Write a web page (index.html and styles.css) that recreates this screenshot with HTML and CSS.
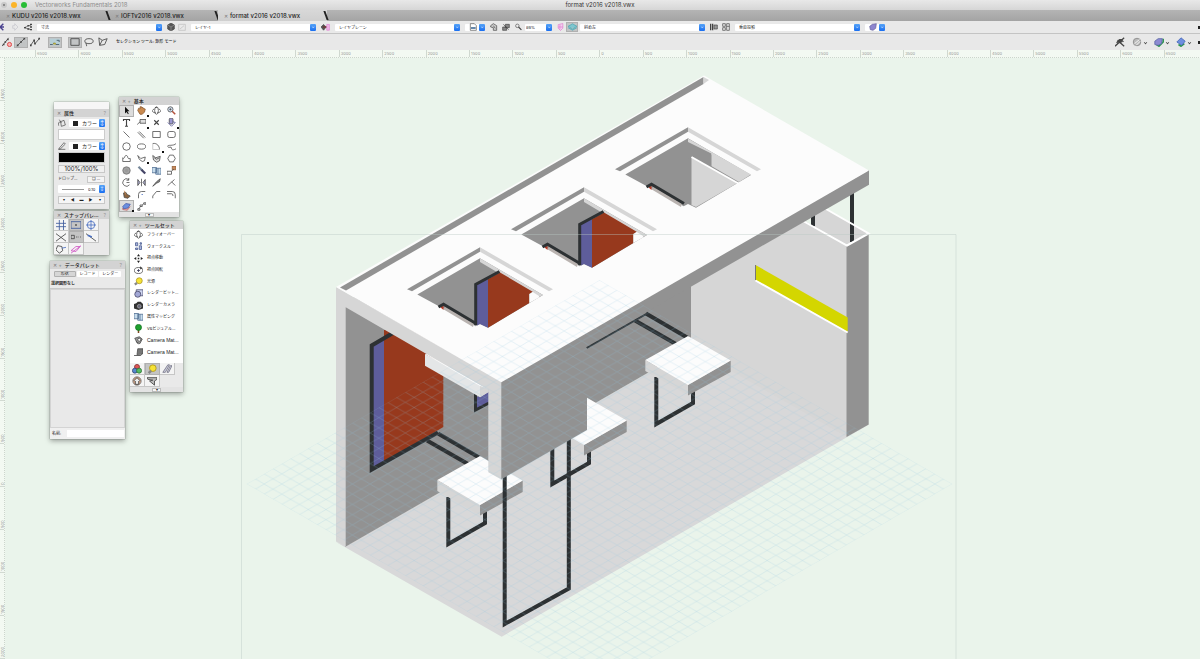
FILE: index.html
```html
<!DOCTYPE html>
<html lang="ja">
  <head>
    <meta charset="UTF-8" />
    <meta name="viewport" content="width=device-width, initial-scale=1.0" />
    <title>format v2016 v2018.vwx</title>
    <link rel="stylesheet" href="styles.css">
  </head>

  <body>
    <header class="titlebar">
      <div class="lights">
        <span class="light close"></span>
        <span class="light minimize"></span>
        <span class="light zoom"></span>
        <span class="app-name">Vectorworks Fundamentals 2018</span>
      </div>
      <div class="title">format v2016 v2018.vwx</div>
    </header>

    <nav class="tabs">
      <button class="tab"><span class="x">✕</span>KUDU v2016 v2018.vwx</button>
      <button class="tab"><span class="x">✕</span>IOFTv2016 v2018.vwx</button>
      <button class="tab active"><span class="x">✕</span>format v2016 v2018.vwx</button>
    </nav>

    <div class="viewbar">
      <div class="group wide">
        <svg class="ico" viewBox="0 0 12 12"><path d="M5 1L0 6l5 5M0 6h6" stroke="#4b4390" stroke-width="2"/></svg>
        <svg class="ico" viewBox="0 0 12 12"><path d="M4 1l5 5-5 5V8H1V4h3z" stroke="#c4c4cc"/></svg>
        <svg class="ico" viewBox="0 0 12 12"><path d="M0 7l11-4M0 7l11 3" stroke="#555"/><path d="M0 7h3M5 4h3M5 9h3M9 2h3M9 6h3M9 10h3" stroke="#444" stroke-width="2"/></svg>
      </div>
      <div class="drop"><select aria-label="クラス"><option>寸法</option></select></div>
      <div class="group">
        <svg class="ico" viewBox="0 0 12 12"><path d="M6 0l5 3v6l-5 3-5-3V3z" fill="#555"/><path d="M1 3l5 3 5-3M6 6v6" stroke="#999"/></svg>
        <svg class="ico" viewBox="0 0 12 12"><path d="M1 2h10v9H1zM3 9l6-5" stroke="#bbb"/></svg>
      </div>
      <div class="drop"><select aria-label="レイヤ"><option>レイヤ-1</option></select></div>
      <svg class="ico plane" viewBox="0 0 14 12"><path d="M0 6l4-4 4 4-4 5z" fill="#555"/><path d="M3 6h8" stroke="#733" stroke-width="2"/><path d="M9 2h4v9H9z" stroke="#df7bd0" fill="#f0b9e8"/></svg>
      <div class="drop"><select aria-label="プレーン"><option>レイヤプレーン</option></select></div>
      <div class="drop small">
        <svg class="ico" viewBox="0 0 12 12"><path d="M2 1h6l3 3v7H2z" fill="#fff" stroke="#555"/><path d="M3 6h7v3H3z" fill="#68a" stroke="none"/></svg>
        <select aria-label="ビュー"><option></option></select>
      </div>
      <div class="group wide">
        <svg class="ico" viewBox="0 0 12 12"><path d="M1 4l4-3 5 3v7H5V7L1 6z" fill="#ccc"/><path d="M5 4l3 4"/></svg>
        <svg class="ico" viewBox="0 0 12 12"><path d="M5 2h6v5H5zM1 6h6v5H1z" fill="#888"/><path d="M2 2l8 8"/></svg>
      </div>
      <div class="group">
        <svg class="ico lens" viewBox="0 0 12 12"><circle cx="4" cy="4" r="3"/><path d="M6 6l5 5" stroke-width="2"/></svg>
        <div class="drop percent"><select aria-label="倍率"><option>89%</option></select></div>
      </div>
      <div class="group tight">
        <svg class="ico lens" viewBox="0 0 12 12"><path d="M2 2l8-2v8l-4 4-4-4zM5 2v8M2 6h8" stroke="#dc6fcb" fill="#f3d0ee"/></svg>
        <button class="plan on" aria-label="表示"><svg class="ico plane" viewBox="0 0 14 12"><path d="M7 1l7 4-7 4-7-4zM0 7l7 4 7-4" fill="#7cc6cf" stroke="#4aa3ae"/></svg></button>
        <div class="drop"><select aria-label="ビュー方向"><option>斜め左</option></select></div>
      </div>
      <div class="group wide">
        <svg class="ico" viewBox="0 0 12 12"><path d="M1 1v10M4 1v10" stroke-width="2"/><path d="M6 3h5v6H6z" fill="#999"/></svg>
        <svg class="ico" viewBox="0 0 12 12"><path d="M1 1h4v4H1zM1 7h4v4H1zM7 1h4v10H7zM7 5h4"/></svg>
      </div>
      <div class="drop"><select aria-label="投影"><option>垂直投影</option></select></div>
      <div class="drop small">
        <svg class="ico" viewBox="0 0 12 12"><path d="M1 5l4-3 6-1-1 7-4 3-4-1z" fill="#8d86cf" stroke="#67629b"/></svg>
        <select aria-label="レンダリング"><option></option></select>
      </div>
      <span class="more"></span>
    </div>

    <div class="modebar">
      <div class="modes">
        <button aria-label="変形禁止"><svg class="ico" viewBox="0 0 12 12"><path d="M0 11L8 1"/><path d="M1 9h2M3 6h2M6 3h2" stroke-width="2"/><circle cx="9" cy="9" r="2.5" stroke="#d33" fill="#f8b5b5"/></svg></button>
        <button class="on" aria-label="単一変形"><svg class="ico" viewBox="0 0 12 12"><path d="M1 11L11 1"/><path d="M1 10h2M5 6h2M9 2h2" stroke-width="2"/></svg></button>
        <button aria-label="複数変形"><svg class="ico" viewBox="0 0 12 12"><path d="M0 11l5-7 1 4 6-7"/><path d="M0 10h2M4 4h2M5 8h2M10 2h2" stroke-width="2"/></svg></button>
      </div>
      <div class="modes">
        <button class="on" aria-label="ハンドル"><svg class="ico" viewBox="0 0 12 12"><path d="M0 2h12v8H0z" fill="#b7cfd6" stroke="none"/><path d="M0 9h3l2-2 2 2h4M8 4h3v2" stroke="#456"/><path d="M4 8h3" stroke="#b7a733" stroke-width="2"/></svg></button>
      </div>
      <div class="modes">
        <button class="on" aria-label="矩形"><svg class="ico" viewBox="0 0 12 12"><path d="M1 2h10v8H1z"/></svg></button>
        <button aria-label="なげなわ"><svg class="ico" viewBox="0 0 12 12"><ellipse cx="6" cy="5" rx="5" ry="3"/><path d="M3 7c-2 1 1 2 0 4"/></svg></button>
        <button aria-label="多角形"><svg class="ico" viewBox="0 0 12 12"><path d="M1 1l4 3 6-2-3 7-6 1zM2 10l3-6"/></svg></button>
      </div>
      <span class="mode-name">セレクション ツール: 矩形 モード</span>
      <div class="options">
        <button aria-label="スナップ"><svg class="ico" viewBox="0 0 12 12"><path d="M0 11L11 1M3 4l8 7M2 7c3-5 6-5 8-1" stroke-width="1.5"/><circle cx="6" cy="5" r="2" fill="#444"/></svg></button>
        <button aria-label="設定"><svg class="ico" viewBox="0 0 12 12"><circle cx="6" cy="6" r="4.5" fill="#bbb" stroke="#888"/><path d="M3 8l6-5M5 10l5-5" stroke="#fff"/></svg><i class="chev"></i></button>
        <button aria-label="表示設定"><svg class="ico" viewBox="0 0 12 12"><path d="M3 9l3 2 5-5V2" stroke="#2f9650" stroke-width="2"/><path d="M1 5l4-3h5l-1 6-4 2-4-1z" fill="#8d8ad2" stroke="#5c68a6"/></svg><i class="chev"></i></button>
        <button aria-label="方向"><svg class="ico" viewBox="0 0 12 12"><path d="M3 9l3 2 4-3" stroke="#2f9650" stroke-width="2"/><path d="M6 1l5 4-4 5-6-4z" fill="#6f8fe0" stroke="#4868b8"/></svg><i class="chev"></i></button>
        <span class="more"></span>
      </div>
    </div>

    <main class="workspace">
      <svg class="drawing" viewBox="0 50 1200 609" preserveAspectRatio="xMidYMid slice">
        <defs>
          <pattern id="grid" patternUnits="userSpaceOnUse" x="599.5" y="280" width="17.65" height="10.2">
            <path class="grid-line" d="M0 0L17.65 10.2M17.65 0L0 10.2"/>
          </pattern>
          <g id="stool">
            <path class="bar" d="M438 433.5L480 458M427 440.5L468 464"/>
            <path class="bar" d="M448.300 497V544L485 523V510"/>
            <path class="light-face" d="M437.300 480L480 505V515L437.300 491z"/>
            <path class="dark-face" d="M480 505L522.700 480.500V492L480 515.500z"/>
            <path class="top-face" d="M437.300 480L480 456L522.700 480.500L480 505z"/>
          </g>
          <g id="groove">
            <path class="dark-face" d="M407 289.300L480 247.300V251.700L412 291.300z"/>
            <path class="light-face" d="M480 247.300L553 289.300L549 291.300L480 251.700z"/>
            <path class="dark-face" d="M417.300 294.500L480 258.300L543 295L488 327.700L480 324L475.700 326.300z"/>
          </g>
          <g id="rail">
            <path d="M443 309L446 306L474 323L473 327z" fill="#b9b3b0"/>
            <path d="M440.500 307.500L443.500 305.500V310z" fill="#b83a26"/>
            <path class="bar thin" d="M438.500 307L443.500 304.200L476 323.500"/>
          </g>
          <g id="skylight">
            <use href="#groove"/>
            <path class="light-face" d="M480 258.300L543 295L539 297L480 262z"/>
            <path class="blue" d="M477 284L488 278V327.700L480 324L477 325.500z"/>
            <path class="red" d="M488 279.300L500 272.500L532.700 291.700L529.300 294V303L488 327.700z"/>
            <path class="top-face" d="M529.300 294L532.700 292L539 296V297.500L529.300 303z"/>
            <path class="bar thin" d="M475.700 325V284.500L499.500 271.500"/>
            <use href="#rail"/>
          </g>
        </defs>

        <!-- floor and walls -->
        <path class="floor" d="M336 542L346 546L691 348L869 424.500L501.700 636.700z"/>
        <path class="dark-face" d="M345 300L691 200V348L345 547z"/>
        <path class="light-face" d="M691 286L805 221L847 245.500V437L691 348z"/>
        <path class="light-face" d="M812 216L827 209L868 233L847 245L812 226z"/>
        <path class="dark-face" d="M846.500 246L868.700 233.500V424.500L846.500 437z"/>
        <path class="bar" d="M813 205V226M852 190V242"/>
        <path class="rim" d="M804 221.500L847 245.500L868.700 233.500L826 209"/>
        <path fill="#d4d600" d="M755.500 265L847.700 317.500V332L755.500 280z"/>
        <path class="rim" d="M755.500 280.500L847.700 332.500"/>
        <path d="M755.500 265V280" stroke="#777"/>

        <!-- wall picture -->
        <path class="red" d="M384 330H443.300V427L384 462.500z"/>
        <path class="blue" d="M373 346L384 338V462.500L373 469z"/>
        <path class="bar" d="M393 333L371.700 345.500V469.500L438 432.500"/>
        <path class="blue" d="M477 397L489 391V403L477 409z"/>
        <path class="bar thin" d="M475.500 394V410L489 403"/>

        <use href="#stool" x="104" y="-60"/>
        <use href="#stool"/>

        <!-- counter panel and roof -->
        <path class="bar" d="M504.700 470V624L568.800 588.500V435"/>
        <path class="dark-face" d="M501 381L869 170V184.700L691.300 286.500L587 346V430L501 479.500z"/>
        <path class="bar hair" d="M586.700 348L648 313"/>
        <use href="#stool" x="208" y="-120"/>
        <path class="shelf" d="M425 354V365.700L480 397.300L488.500 392V387z"/>
        <path class="top-face" d="M425 354L430 353L488.500 387V389L480 386z"/>
        <path class="light-face" d="M480 386L488.500 389V392L480 397.300z"/>
        <path class="light-face" d="M336 287L501.300 381V479.500L488.300 472.300V389.700L345.700 307.300V546.700L336 541.500z"/>
        <path class="roof" d="M336 287L704 75.500L869 170.500L501.300 382.300z"/>
        <path class="dark-face" d="M340 287.500L703.500 77V84L346 290.500z"/>
        <path class="light-face" d="M703.500 77L709 80L703.500 84z"/>
        <use href="#skylight"/>
        <use href="#skylight" x="104" y="-60"/>
        <use href="#groove" x="208" y="-120"/>
        <path class="light-face" d="M688 138.500L751 174.500L739 182L711.300 166V153.500L688 142z"/>
        <path class="dark-face" d="M688 143L711.300 155V167L688 158z"/>
        <path class="light-face" d="M691.500 157L737.500 183L696 207L691.500 205z"/>
        <path class="rim" d="M691.500 157L738.500 183.500"/>
        <use href="#rail" x="208" y="-120"/>

        <path fill="url(#grid)" d="M599.500 280L952.500 484L599.500 688L246.500 484z"/>
        <path class="page-edge" d="M241.500 659V234.500H956V659"/>
      </svg>

      <div class="ruler top">
        <span>6500</span><span>6000</span><span>5500</span><span>5000</span><span>4500</span><span>4000</span><span>3500</span><span>3000</span><span>2500</span><span>2000</span><span>1500</span><span>1000</span><span>500</span><span>0</span><span>500</span><span>1000</span><span>1500</span><span>2000</span><span>2500</span><span>3000</span><span>3500</span><span>4000</span><span>4500</span><span>5000</span><span>5500</span><span>6000</span><span>6500</span>
      </div>
      <div class="ruler left">
        <span>4500</span><span>4000</span><span>3500</span><span>3000</span><span>2500</span><span>2000</span><span>1500</span><span>1000</span><span>500</span><span>0</span><span>500</span><span>1000</span><span>1500</span><span>2000</span>
      </div>

      <section class="palette attributes">
        <div class="grip"></div>
        <div class="palette-title"><span class="x">✕</span><b>属性</b><span class="help">?</span></div>
        <div class="attr-body">
          <div class="attr-row">
            <svg class="ico" viewBox="0 0 12 12"><path d="M4 4l5-2 2 7-6 2zM4 4c-3 0-4 3-3 6M2 1l3 5"/></svg>
            <div class="drop color"><span class="swatch"></span><select aria-label="面の属性"><option>カラー</option></select></div>
          </div>
          <div class="fill-box"></div>
          <div class="attr-row">
            <svg class="ico" viewBox="0 0 12 12"><path d="M2 9l7-8 2 2-7 7-3 1zM1 11h10"/></svg>
            <div class="drop color"><span class="swatch"></span><select aria-label="線の属性"><option>カラー</option></select></div>
          </div>
          <div class="fill-box pen"></div>
          <button class="opacity">100%/100%</button>
          <div class="attr-row shadow"><label for="shadow">ドロップ…</label><button id="shadow">❏ …</button></div>
          <div class="drop weight"><span class="line"></span><select aria-label="線の太さ"><option>0.10</option></select></div>
          <div class="markers"><button>▾</button><button>◀</button><button>▬</button><button>▶</button><button>▾</button></div>
        </div>
      </section>

      <section class="palette snaps">
        <div class="palette-title"><span class="x">✕</span><b>スナップパレ…</b><span class="help">?</span></div>
        <div class="snap-grid">
          <button aria-label="グリッド"><svg class="ico" viewBox="0 0 12 12"><path d="M4 0v12M9 0v12M0 4h12M0 8h12" stroke="#3d5a9c"/></svg></button>
          <button class="on" aria-label="図形"><svg class="ico" viewBox="0 0 12 12"><path d="M0 2h12v8H0z" stroke="#3d5a9c"/><path d="M5 6h2" stroke-width="2"/></svg></button>
          <button aria-label="角度"><svg class="ico" viewBox="0 0 12 12"><circle cx="6" cy="6" r="4.500" stroke="#4a6fc0"/><path d="M6 0v12M0 6h12" stroke="#4a6fc0"/></svg></button>
          <button aria-label="交点"><svg class="ico" viewBox="0 0 12 12"><path d="M0 2l12 9M0 11l12-9"/></svg></button>
          <button class="on" aria-label="スマートポイント"><svg class="ico" viewBox="0 0 12 12"><path d="M0 4h4v4H0zM6 6h1M8 6h1M11 6h1"/></svg></button>
          <button aria-label="定点"><svg class="ico" viewBox="0 0 12 12"><path d="M0 2l12 9"/><path d="M2 4l5 2" stroke="#4a6fc0" stroke-width="2"/></svg></button>
          <button aria-label="エッジ"><svg class="ico" viewBox="0 0 12 12"><path d="M2 2l-2 5 4 4 4-3M2 2l5 1 1 5"/><path d="M7 5l5-1" stroke="#4a6fc0"/></svg></button>
          <button aria-label="接線"><svg class="ico" viewBox="0 0 12 12"><path d="M0 8l6-5h5l-5 6z" stroke="#d05ac5"/><path d="M0 11L12 2" stroke="#d05ac5"/></svg></button>
        </div>
      </section>

      <section class="palette basic">
        <div class="palette-title"><span class="x">✕ +</span><b>基本</b></div>
        <div class="tool-grid">
          <button class="on" aria-label="セレクション"><svg class="ico" viewBox="0 0 12 12"><path d="M4 1v9l2-2 2 3 1-1-2-3h3z" fill="#111" stroke="none"/></svg></button>
          <button class="sub" aria-label="パン"><svg class="ico" viewBox="0 0 12 12"><path d="M1 6l1-3 2 1V1h2v1h2v1l3 1-1 4-3 3H4z" fill="#c98a50" stroke="#8a5a30"/></svg></button>
          <button aria-label="フライオーバー"><svg class="ico" viewBox="0 0 12 12"><ellipse cx="6" cy="6" rx="2.500" ry="5"/><path d="M3 4C-2 6 1 9 5 9M9 4c5 2 2 5-2 5M4 2h3"/></svg></button>
          <button aria-label="ズーム"><svg class="ico" viewBox="0 0 12 12"><circle cx="4.500" cy="4.500" r="3.500" fill="#d7e5f5"/><path d="M3 4.500h3M4.500 3v3"/><path d="M7 7l4 4" stroke="#b2503a" stroke-width="2"/></svg></button>
          <button aria-label="文字"><svg class="ico" viewBox="0 0 12 12"><path d="M2 4V2h8v2M6 2v9M4 11h4" stroke-width="1.500"/></svg></button>
          <button class="sub" aria-label="引出線"><svg class="ico" viewBox="0 0 12 12"><path d="M4 2h8v5H4zM4 5L0 9" fill="#ddd"/></svg></button>
          <button aria-label="基準点"><svg class="ico" viewBox="0 0 12 12"><path d="M3 3l6 6M9 3L3 9" stroke-width="1.500"/></svg></button>
          <button class="sub" aria-label="シンボル"><svg class="ico" viewBox="0 0 12 12"><rect x="3" y="0" width="5" height="8" rx="2" fill="#9b98d0"/><path d="M1 6l5 5 5-5-3-1" stroke="#4f4d92"/></svg></button>
          <button aria-label="直線"><svg class="ico" viewBox="0 0 12 12"><path d="M2 2l8 8"/></svg></button>
          <button aria-label="ダブルライン"><svg class="ico" viewBox="0 0 12 12"><path d="M3 2l8 8M1 3l8 8"/></svg></button>
          <button aria-label="四角形"><svg class="ico" viewBox="0 0 12 12"><path d="M1 2h10v8H1z"/></svg></button>
          <button aria-label="隅の丸い四角形"><svg class="ico" viewBox="0 0 12 12"><rect x="1" y="2" width="10" height="8" rx="2.500"/></svg></button>
          <button aria-label="円"><svg class="ico" viewBox="0 0 12 12"><circle cx="6" cy="6" r="5"/></svg></button>
          <button aria-label="長円"><svg class="ico" viewBox="0 0 12 12"><ellipse cx="6" cy="6" rx="5.500" ry="3.500"/></svg></button>
          <button class="sub" aria-label="円弧"><svg class="ico" viewBox="0 0 12 12"><path d="M1 2c6-1 9 4 9 8"/><path d="M1 2v8h9" stroke="#bbb"/></svg></button>
          <button aria-label="フリーハンド"><svg class="ico" viewBox="0 0 12 12"><path d="M12 2C9 6 0 3 1 6s5-1 5 2 3 3 6 1"/></svg></button>
          <button aria-label="曲線"><svg class="ico" viewBox="0 0 12 12"><path d="M1 10V5c3 3 2-4 5-3s0 5 5 4v4z"/></svg></button>
          <button class="sub" aria-label="多角形"><svg class="ico" viewBox="0 0 12 12"><path d="M1 2l4 4 6-2-1 5-3 1-4-3z"/></svg></button>
          <button aria-label="連続線"><svg class="ico" viewBox="0 0 12 12"><path d="M1 2l4 3 6-2-1 6-4 2-4-3z" fill="#ddd"/><path d="M3 5l3 2 4-2"/></svg></button>
          <button aria-label="正多角形"><svg class="ico" viewBox="0 0 12 12"><path d="M3.500 1.500h5L11 6l-2.500 4.500h-5L1 6z"/></svg></button>
          <button aria-label="螺旋"><svg class="ico" viewBox="0 0 12 12"><circle cx="6" cy="6" r="5" fill="#999" stroke="#777"/><circle cx="6" cy="6" r="3" stroke="#aaa"/></svg></button>
          <button aria-label="アイドロッパ"><svg class="ico" viewBox="0 0 12 12"><path d="M2 1l5 5" stroke="#789" stroke-width="3"/><path d="M6 5l5 5" stroke="#446" stroke-width="3"/></svg></button>
          <button aria-label="属性マッピング"><svg class="ico" viewBox="0 0 12 12"><path d="M0 2h6v7H0zM5 3h7v8H5zM8 3v8" fill="#c7dcec" stroke="#49688e"/></svg></button>
          <button aria-label="変形"><svg class="ico" viewBox="0 0 12 12"><path d="M7 0h5v5H7z" fill="#c58a5f" stroke="#8a5a30"/><path d="M0 7h6v4H0zM6 7l3-3"/></svg></button>
          <button aria-label="回転"><svg class="ico" viewBox="0 0 12 12"><path d="M10 9a5 5 0 1 1-1-7M9 0v3H6M6 6h4"/></svg></button>
          <button aria-label="ミラー"><svg class="ico" viewBox="0 0 12 12"><path d="M6 1v10M1 2v8l3-4zM11 2v8L8 6z" fill="#aac"/></svg></button>
          <button aria-label="カッター"><svg class="ico" viewBox="0 0 12 12"><path d="M1 11l5-6 5-4-1 4-4 2z" fill="#888"/></svg></button>
          <button aria-label="トリミング"><svg class="ico" viewBox="0 0 12 12"><path d="M1 10l9-8M6 5l5 5"/></svg></button>
          <button aria-label="変位"><svg class="ico" viewBox="0 0 12 12"><path d="M2 4l3-1 2 3 4 2-3 3-5-1z" fill="#8c6540"/><path d="M3 1l2 5" stroke="#c98a50"/></svg></button>
          <button aria-label="フィレット"><svg class="ico" viewBox="0 0 12 12"><path d="M2 11V6q0-4 4-4h5"/><path d="M6 6h2" stroke="#4a6fc0"/></svg></button>
          <button aria-label="面取り"><svg class="ico" viewBox="0 0 12 12"><path d="M1 11V8l5-6h5"/></svg></button>
          <button aria-label="オフセット"><svg class="ico" viewBox="0 0 12 12"><path d="M0 2h7q4 0 4 4v5M0 5h6q2 0 2 3"/></svg></button>
          <button class="sub on" aria-label="消しゴム"><svg class="ico" viewBox="0 0 12 12"><path d="M1 8v2l6 1 4-5" stroke="#c26a6a" fill="#e8a8a8"/><path d="M1 6l4-4 6 1-3 5-6 1z" fill="#6b8fe0" stroke="#4659a8"/></svg></button>
          <button aria-label="リシェイプ"><svg class="ico" viewBox="0 0 12 12"><path d="M1 9h3v2H1zM4 4h3v2H4zM9 1h3v2H9zM2 9l3-3M7 4l2-2"/></svg></button>
        </div>
        <div class="palette-foot"><button aria-label="もっと見る">▾</button></div>
      </section>

      <section class="palette toolset">
        <div class="palette-title"><span class="x">✕ +</span><b>ツールセット</b></div>
        <ul class="tool-list">
          <li><svg class="ico" viewBox="0 0 12 12"><ellipse cx="6" cy="6" rx="2.500" ry="5"/><path d="M3 4C-2 6 1 9 5 9M9 4c5 2 2 5-2 5M4 2h3"/></svg>フライオーバー</li>
          <li><svg class="ico" viewBox="0 0 12 12"><path d="M2 1h3v4H2zM7 5h3v5H7zM2 8h3v2H2zM8 1h2v2H8z" fill="#aab6dc" stroke="#44558c"/></svg>ウォークスルー</li>
          <li><svg class="ico" viewBox="0 0 12 12"><path d="M6 0l2 3H4zM6 12l2-3H4zM0 6l3-2v4zM12 6L9 4v4zM5 5h2v2H5z" fill="#222" stroke="none"/></svg>視点移動</li>
          <li><svg class="ico" viewBox="0 0 12 12"><ellipse cx="6" cy="6" rx="5.500" ry="4"/><path d="M6 4v4M4 6h4" stroke="#335"/><path d="M8 1l3 2-3 1" fill="#444"/></svg>視点回転</li>
          <li><svg class="ico" viewBox="0 0 12 12"><circle cx="7" cy="5" r="4" fill="#f7e335" stroke="#aa9420"/><path d="M1 10l3-2" stroke-width="3" stroke="#888"/></svg>光源</li>
          <li><svg class="ico" viewBox="0 0 12 12"><path d="M3 1h9v8H3z" fill="#cfd6ef" stroke="#446"/><circle cx="5" cy="7" r="4" fill="#a3a8d6" stroke="#446"/></svg>レンダービット…</li>
          <li><svg class="ico" viewBox="0 0 12 12"><path d="M0 4l3-1 2-2h4l3 3v6l-6 2-6-2z" fill="#333" stroke="none"/><circle cx="7" cy="7" r="2.500" fill="#667" stroke="#aaa"/></svg>レンダーカメラ</li>
          <li><svg class="ico" viewBox="0 0 12 12"><path d="M0 2h6v7H0zM5 3h7v8H5zM8 3v8" fill="#c7dcec" stroke="#49688e"/></svg>属性マッピング</li>
          <li><svg class="ico" viewBox="0 0 12 12"><path d="M6 6v6" stroke="#7a4a22" stroke-width="2"/><circle cx="6" cy="4.500" r="4" fill="#1fa02f" stroke="#117020"/></svg>VBビジュアル…</li>
          <li class="latin"><svg class="ico" viewBox="0 0 12 12"><path d="M1 3l6-2 4 3-3 6-4-1z" fill="#999"/><circle cx="7" cy="5" r="2" fill="#fff"/><path d="M3 7l3 4"/></svg>Camera Mat...</li>
          <li class="latin"><svg class="ico" viewBox="0 0 12 12"><path d="M5 1h7v6L8 9H4z" fill="#777"/><path d="M0 10h9l2-2" fill="#999"/></svg>Camera Mat...</li>
        </ul>
        <div class="set-grid">
          <button aria-label="ビジュアライズ"><svg class="ico" viewBox="0 0 12 12"><circle cx="6" cy="3.500" r="3" fill="#d55" stroke="#833"/><circle cx="3.500" cy="8" r="3" fill="#58c" stroke="#347"/><circle cx="8.500" cy="8" r="3" fill="#5b6" stroke="#373"/></svg></button>
          <button class="on" aria-label="光源"><svg class="ico" viewBox="0 0 12 12"><circle cx="7" cy="5" r="4" fill="#f7e335" stroke="#aa9420"/><path d="M2 11l3-3" stroke-width="3" stroke="#888"/></svg></button>
          <button aria-label="寸法"><svg class="ico" viewBox="0 0 12 12"><path d="M1 10l6-9h2l-5 9zM6 10l4-8h2l-4 8z" stroke="#778" fill="#ccd"/></svg></button>
          <button aria-label="建物"><svg class="ico" viewBox="0 0 12 12"><circle cx="6" cy="6" r="5" fill="#d0a184" stroke="#777"/><path d="M2 6l4-4 4 4M4 6v4h4V6" fill="#eee"/></svg></button>
          <button aria-label="ファスナー"><svg class="ico" viewBox="0 0 12 12"><path d="M0 2h12v2L9 6v5L3 6l4-1-6-1z" fill="#bbb"/></svg></button>
        </div>
        <div class="palette-foot"><button aria-label="もっと見る">▾</button></div>
      </section>

      <section class="palette data">
        <div class="palette-title"><span class="x">✕ +</span><b>データパレット</b><span class="help">?</span></div>
        <div class="data-tabs"><button class="on">形状</button><button>レコード</button><button>レンダー</button></div>
        <div class="selection">選択図形なし</div>
        <div class="data-body"></div>
        <div class="data-name"><label for="name">名前:</label><input id="name" type="text" /></div>
      </section>
    </main>
  </body>
</html>
```
FILE: styles.css
```css
* {
  box-sizing: border-box;
}
body {
  margin: 0;
  min-height: 100vh;
  display: flex;
  flex-direction: column;
  font-family: Inter, 'Noto Sans CJK JP', sans-serif;
  font-size: 4px;
  line-height: 6px;
  color: #222;
  background-color: #eaf4eb;
  overflow: hidden;
}
button,
select,
input {
  font: inherit;
  color: inherit;
  margin: 0;
  padding: 0;
  border: 0;
  background: none;
  appearance: none;
}
button {
  display: flex;
  align-items: center;
  justify-content: center;
}
.ico {
  width: 8px;
  height: 8px;
  flex: none;
  fill: none;
  stroke: #444;
  stroke-width: 1;
}

/* title bar and tabs */
.titlebar {
  height: 10px;
  display: grid;
  grid-template-columns: 1fr auto 1fr;
  align-items: center;
  font-size: 6px;
  line-height: 10px;
  background: linear-gradient(#e8e8e8, #d6d6d6);
}
.title {
  color: #333;
}
.lights {
  display: flex;
  align-items: center;
  gap: 4px;
  padding-left: 1px;
}
.light {
  width: 6px;
  height: 6px;
  border-radius: 50%;
}
.close {
  border: 2px solid #c9c9c9;
  background-color: #777;
}
.minimize {
  background-color: #fbb429;
}
.zoom {
  background-color: #28bd36;
}
.app-name {
  margin-left: 4px;
  color: #8c8c8c;
}
.tabs {
  height: 11px;
  display: flex;
  background: linear-gradient(#b4b4b4, #a4a4a4);
}
.tab {
  position: relative;
  width: 109px;
  justify-content: flex-start;
  gap: 2px;
  padding-left: 6px;
  font-size: 6px;
  font-weight: 500;
  white-space: nowrap;
}
.tab.active {
  background: linear-gradient(#d8d8d8, #cfcfcf);
}
.tab::after {
  content: '';
  position: absolute;
  right: 0;
  top: 1px;
  width: 2px;
  height: 9px;
  background-color: #222;
  transform: skewX(20deg);
}
.x {
  font-size: 5px;
  color: #777;
}

/* view bar */
.viewbar {
  height: 13px;
  display: flex;
  align-items: center;
  gap: 5px;
  background-color: #e9e9e9;
  border-bottom: 1px solid #c4c4c4;
}
.group {
  display: flex;
  align-items: center;
  gap: 3px;
}
.group.wide {
  gap: 4px;
}
.group.tight {
  gap: 2px;
}
.plane {
  width: 9px;
}
.lens {
  width: 7px;
}
.plan {
  width: 12px;
  height: 10px;
}
.on {
  background-color: #c2c4c5;
  outline: 1px solid #b0b0b0;
  outline-offset: -1px;
}
.drop {
  position: relative;
  display: flex;
  align-items: center;
  width: 125px;
  height: 7px;
  background-color: #fff;
  border-radius: 1px;
}
.drop select {
  flex: 1;
  min-width: 0;
  height: 7px;
  padding-left: 4px;
  line-height: 7px;
}
.drop::after {
  content: '⌄';
  position: absolute;
  right: 0;
  top: 0;
  width: 6px;
  height: 7px;
  border-radius: 1px;
  color: #fff;
  text-align: center;
  line-height: 5px;
  background: linear-gradient(#55a2f7, #1a6ff0);
  pointer-events: none;
}
.drop.small {
  width: 20px;
  padding-left: 4px;
}
.drop.percent {
  width: 27px;
}
.drop.percent select {
  padding-left: 1px;
}
.more {
  width: 2px;
  height: 3px;
  margin-left: auto;
  background-color: #222;
}

/* mode bar */
.modebar {
  height: 16px;
  display: flex;
  align-items: center;
  gap: 6px;
  background-color: #e8e8e8;
}
.modes {
  display: flex;
}
.modes button {
  width: 14px;
  height: 11px;
}
.modes .ico {
  width: 10px;
  height: 10px;
}
.mode-name {
  font-weight: 500;
}
.options {
  margin-left: auto;
  display: flex;
  align-items: center;
  gap: 7px;
}
.options .ico {
  width: 10px;
  height: 10px;
}
.chev {
  width: 3px;
  height: 3px;
  margin-left: 2px;
  border: solid #444;
  border-width: 0 1px 1px 0;
  transform: rotate(45deg) scale(.8);
}

/* drawing area */
.workspace {
  position: relative;
  flex: 1;
  overflow: hidden;
}
.drawing {
  position: absolute;
  width: 100%;
  height: 100%;
}
.floor {
  fill: #d8d8d9;
}
.roof,
.top-face {
  fill: #fcfcfc;
}
.light-face {
  fill: #d6d6d6;
}
.shelf {
  fill: #e4e6e7;
}
.dark-face {
  fill: #929292;
}
.red {
  fill: #97391d;
}
.blue {
  fill: #5e5d9b;
}
.bar {
  fill: none;
  stroke: #2d3133;
  stroke-width: 4;
}
.bar.thin {
  stroke-width: 3;
}
.bar.hair {
  stroke-width: 2;
}
.rim {
  fill: none;
  stroke: #fff;
  stroke-width: 2;
}
.grid-line {
  fill: none;
  stroke: #8fc4e0;
  stroke-opacity: .3;
  stroke-width: .7;
}
.page-edge {
  fill: none;
  stroke: #b8c8c4;
  stroke-opacity: .4;
}

.ruler {
  position: absolute;
  left: 0;
  top: 0;
  display: flex;
  color: #999;
  background-color: #f3f9f2;
}
.ruler span {
  flex: 1;
}
.ruler.top {
  right: -7px;
  height: 8px;
  padding-left: 35px;
  border-bottom: 1px dotted #ccd5cc;
}
.ruler.top span {
  padding-left: 1px;
  line-height: 8px;
  border-left: 1px solid #d0d8d0;
}
.ruler.left {
  top: 8px;
  bottom: 0;
  width: 5px;
  flex-direction: column;
  border-right: 1px dotted #ccd5cc;
}
.ruler.left span {
  writing-mode: vertical-rl;
  transform: rotate(180deg);
  line-height: 5px;
  padding-top: 1px;
  border-top: 1px solid #d0d8d0;
}

/* floating palettes */
.palette {
  position: absolute;
  background-color: #e9e9e9;
  box-shadow: 0 2px 5px rgba(0, 0, 0, .35), 0 0 1px rgba(0, 0, 0, .5);
}
.palette-title {
  height: 8px;
  display: flex;
  align-items: center;
  gap: 3px;
  padding: 0 3px;
  font-size: 5px;
  background-color: #d3d3d3;
  white-space: nowrap;
}
.palette-title b {
  font-weight: 500;
}
.help {
  margin-left: auto;
  color: #999;
}
.palette-foot {
  height: 5px;
  display: flex;
  justify-content: center;
  align-items: center;
  background-color: #e3e3e3;
}
.palette-foot button {
  width: 9px;
  height: 4px;
  border: 1px solid #bbb;
  background-color: #f5f5f5;
  line-height: 4px;
}

.attributes {
  left: 54px;
  top: 52px;
  width: 55px;
}
.grip {
  height: 7px;
  background-color: #f6f6f6;
}
.attr-body {
  display: flex;
  flex-direction: column;
  gap: 1px;
  padding: 1px 4px 5px;
}
.attr-row {
  display: flex;
  align-items: center;
  justify-content: space-between;
  height: 10px;
}
.drop.color {
  width: 36px;
  height: 8px;
  padding-left: 4px;
  font-size: 5px;
}
.drop.color::after,
.drop.weight::after {
  content: '↕';
  height: 8px;
  line-height: 8px;
}
.swatch {
  width: 5px;
  height: 5px;
  background-color: #222;
}
.fill-box {
  height: 11px;
  border: 1px solid #ccc;
  background-color: #fff;
}
.fill-box.pen {
  background-color: #000;
}
.opacity {
  height: 8px;
  margin-top: 1px;
  border: 1px solid #c8c8c8;
  background-color: #f0f0f0;
  font-size: 6px;
}
.attr-row.shadow button {
  width: 18px;
  height: 7px;
  border: 1px solid #c8c8c8;
  background-color: #f4f4f4;
}
.drop.weight {
  width: 100%;
  height: 8px;
}
.line {
  width: 22px;
  height: 1px;
  margin-left: 4px;
  background-color: #999;
}
.markers {
  display: flex;
  margin-top: 2px;
  border: 1px solid #c8c8c8;
  background-color: #f6f6f6;
}
.markers button {
  flex: 1;
}

.snaps {
  left: 54px;
  top: 161px;
  width: 55px;
}
.snap-grid {
  display: grid;
  grid-template-columns: repeat(3, 15px);
  grid-auto-rows: 12px;
}
.snap-grid button,
.set-grid button {
  border: solid #c6c6c6;
  border-width: 0 1px 1px 0;
  background-color: #f4f4f4;
}
.snap-grid button.on,
.set-grid button.on {
  background-color: #c4c4c4;
}
.snap-grid .ico,
.set-grid .ico {
  width: 10px;
  height: 10px;
}

.basic {
  left: 119px;
  top: 47px;
  width: 60px;
}
.tool-grid {
  display: grid;
  grid-template-columns: repeat(4, 1fr);
  grid-auto-rows: 1fr;
  height: 107px;
  background-color: #fff;
}
.tool-grid .ico,
.tool-list .ico {
  width: 9px;
  height: 9px;
}
.tool-grid button {
  position: relative;
}
.tool-grid .on {
  background-color: #dcdcdc;
}
.sub::after {
  content: '';
  position: absolute;
  right: 0;
  bottom: 0;
  border: 1px solid #111;
}

.toolset {
  left: 130px;
  top: 171px;
  width: 53px;
}
.tool-list {
  display: grid;
  grid-auto-rows: 1fr;
  height: 134px;
  margin: 0;
  padding: 0 0 5px 4px;
  list-style: none;
  background-color: #fff;
}
.tool-list li {
  display: flex;
  align-items: center;
  gap: 4px;
  white-space: nowrap;
}
.tool-list .latin {
  font-family: 'Liberation Sans', sans-serif;
  font-size: 5px;
}
.set-grid {
  display: grid;
  grid-template-columns: repeat(3, 15px);
  grid-auto-rows: 12px;
}

.data {
  left: 50px;
  top: 211px;
  width: 75px;
}
.data-tabs {
  display: flex;
  gap: 1px;
  padding: 2px 4px;
}
.data-tabs button {
  flex: 1;
  height: 6px;
  background-color: #fff;
  border-radius: 1px;
}
.data-tabs .on {
  background-color: #d6d6d6;
}
.selection {
  padding: 2px 1px 1px;
  font-weight: 700;
  border-bottom: 1px solid #c8c8c8;
}
.data-body {
  height: 139px;
  border: 1px solid #d4d4d4;
}
.data-name {
  display: flex;
  align-items: center;
  gap: 6px;
  padding: 2px 1px 2px 2px;
  background-color: #f0f0f0;
}
.data-name input {
  flex: 1;
  min-width: 0;
  height: 7px;
  background-color: #fff;
}
```
